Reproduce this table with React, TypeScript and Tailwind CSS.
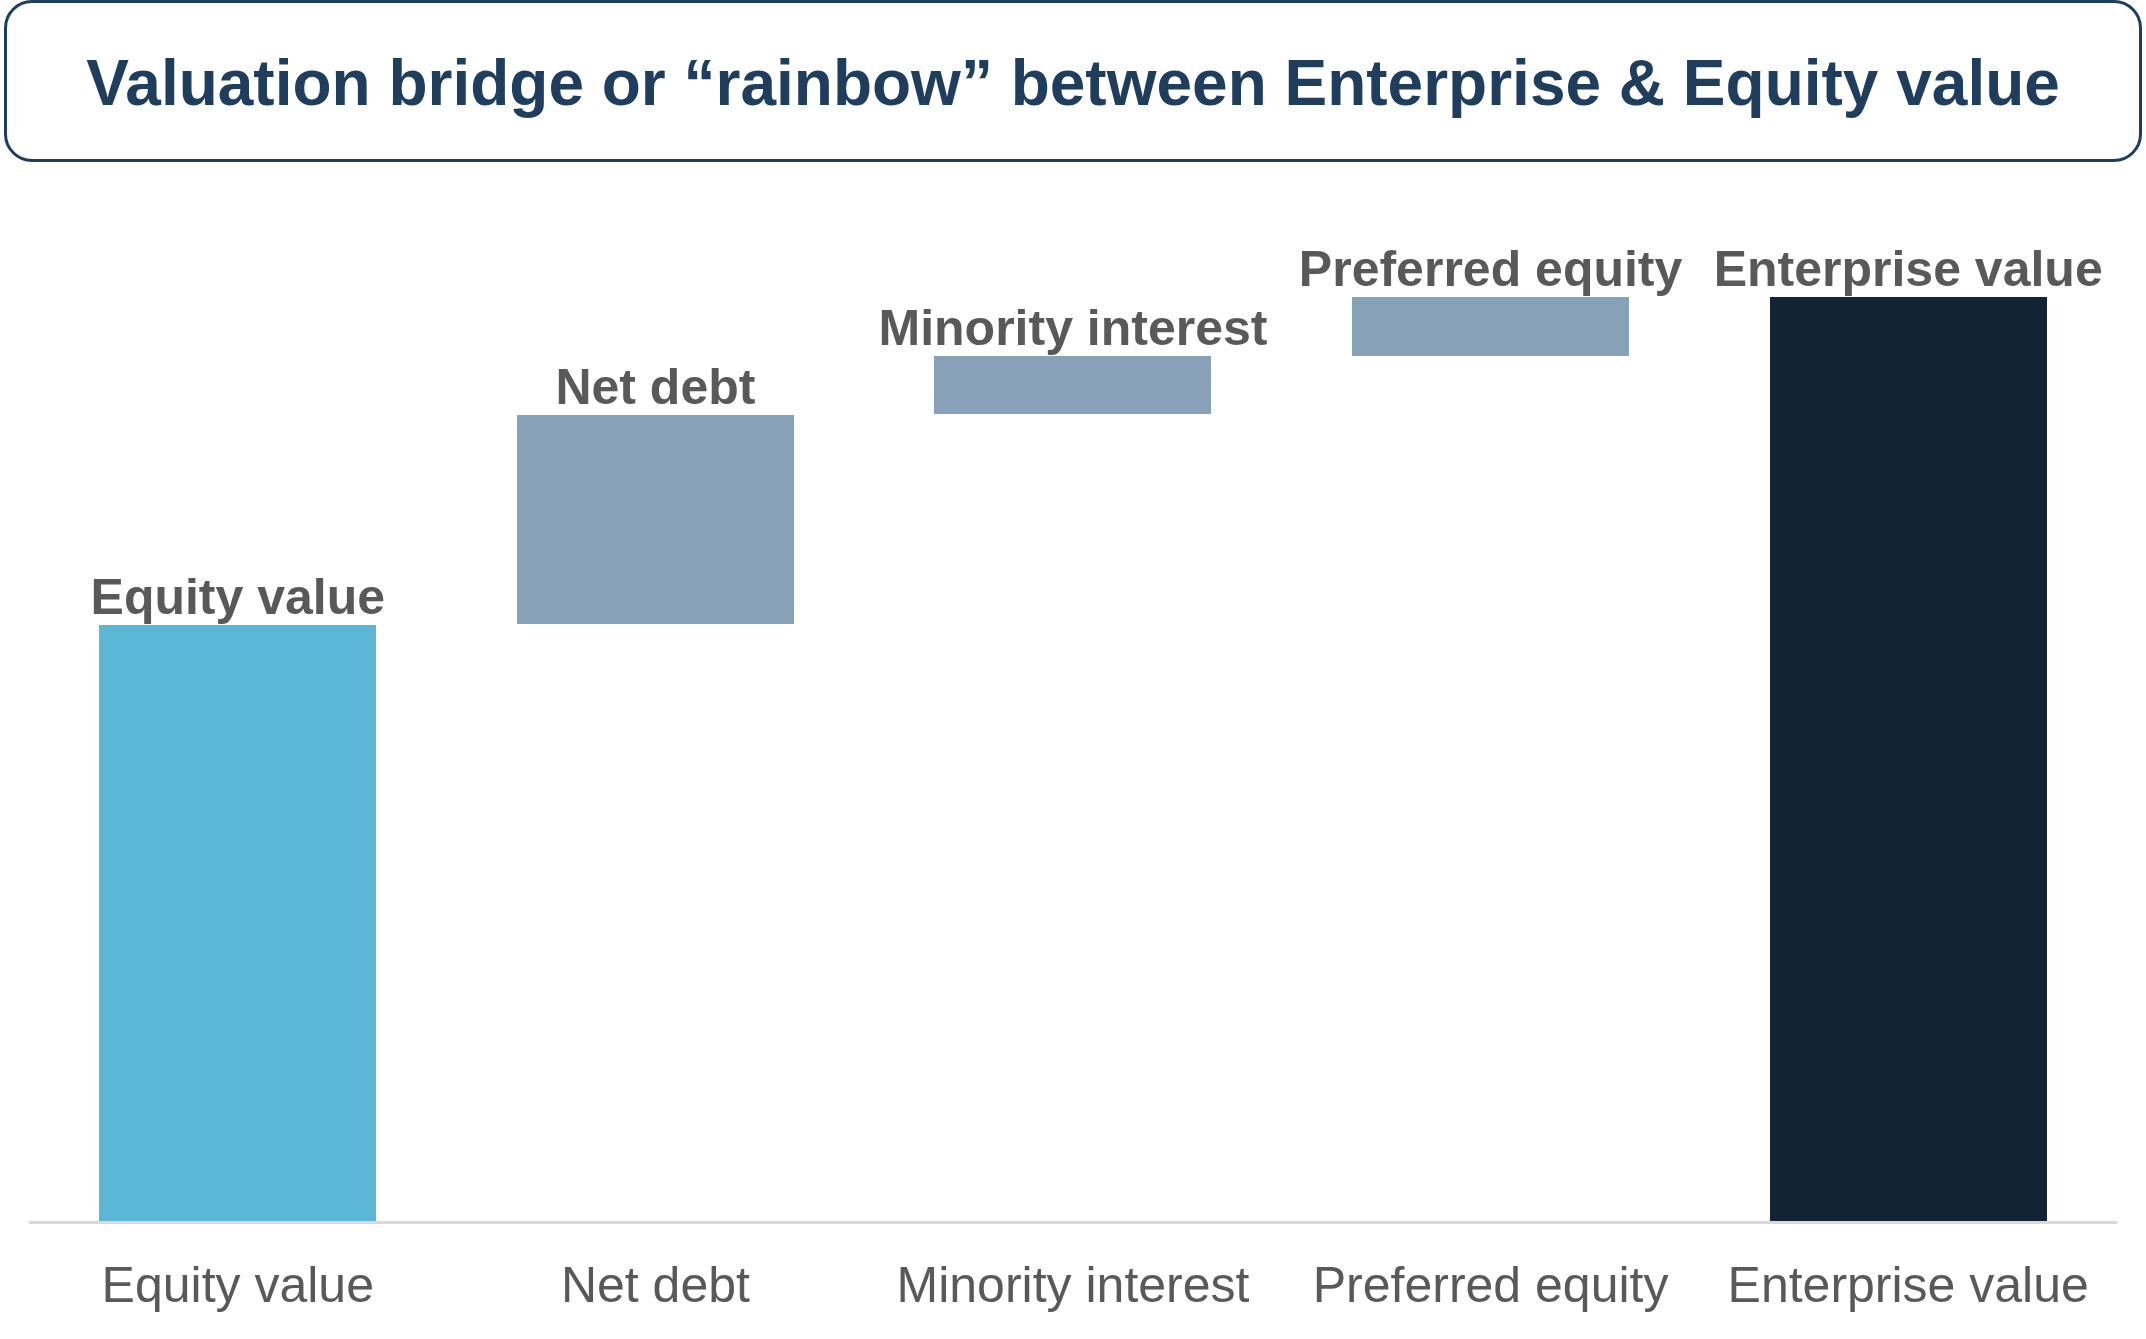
const bars = [
  { name: 'Equity value', height: 596, base: 0, color: 'bg-[#5bb7d5]' },
  { name: 'Net debt', height: 209, base: 597, color: 'bg-[#87a2b8]' },
  { name: 'Minority interest', height: 58, base: 807, color: 'bg-[#87a2b8]' },
  { name: 'Preferred equity', height: 59, base: 865, color: 'bg-[#87a2b8]' },
  { name: 'Enterprise value', height: 924, base: 0, color: 'bg-[#122336]' },
]

export default function App() {
  return (
    <div className="w-[2146px] h-[1339px] bg-white font-['Liberation_Sans',Arial,sans-serif] overflow-hidden">
      <div className="mx-[4px] h-[162px] border-[3px] border-[#1f3d5c] rounded-[28px] flex items-center justify-center pt-[4px]">
        <h1 className="text-[64px] leading-none font-bold text-[#1f3d5c] whitespace-nowrap">
          Valuation bridge or “rainbow” between Enterprise &amp; Equity value
        </h1>
      </div>

      <div className="ml-[29px] w-[2088px]">
        <div className="grid grid-cols-5 h-[1059px]">
          {bars.map((b) => (
            <div key={b.name} className="flex flex-col items-center justify-end">
              <div className="text-[50px] leading-none font-bold text-[#595959] whitespace-nowrap mb-[3px]">
                {b.name}
              </div>
              <div className={`w-[277px] ${b.color}`} style={{ height: b.height }} />
              <div style={{ height: b.base }} />
            </div>
          ))}
        </div>
        <div className="h-[3px] bg-[#d9d9d9]" />
        <div className="grid grid-cols-5 pt-[36px]">
          {bars.map((b) => (
            <div key={b.name} className="text-center text-[50px] leading-none text-[#595959] whitespace-nowrap">
              {b.name}
            </div>
          ))}
        </div>
      </div>
    </div>
  )
}
